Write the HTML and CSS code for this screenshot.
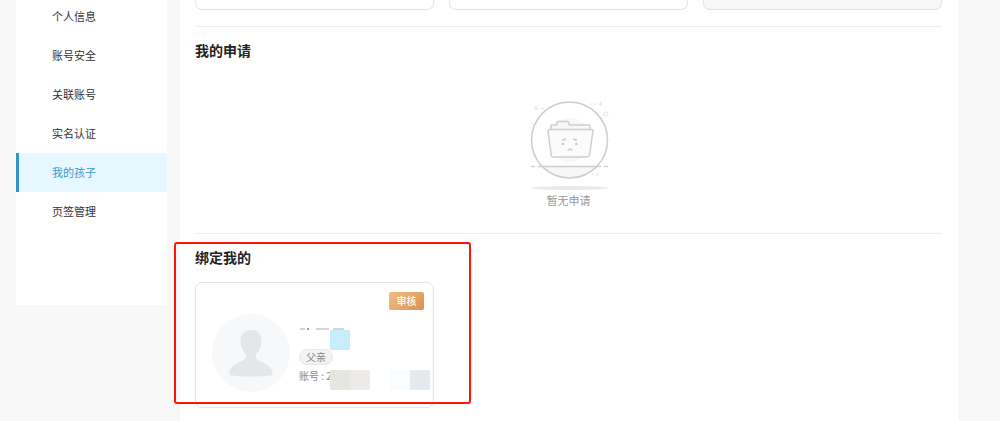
FILE: index.html
```
<!DOCTYPE html>
<html lang="zh-CN">
<head>
    <meta charset="utf-8">
    <title>我的孩子</title>
    <link rel="stylesheet" href="styles.css">
</head>
<body>
    <div class="page">
        <nav class="sidebar">
            <a class="menu-item" href="#info">个人信息</a>
            <a class="menu-item" href="#security">账号安全</a>
            <a class="menu-item" href="#linked">关联账号</a>
            <a class="menu-item" href="#realname">实名认证</a>
            <a class="menu-item active" href="#children">我的孩子</a>
            <a class="menu-item" href="#tabs">页签管理</a>
        </nav>

        <main class="content">
            <div class="card-grid">
                <div class="card card-end"></div>
                <div class="card card-end"></div>
                <div class="card card-end card-add"></div>
            </div>

            <section class="section">
                <h2>我的申请</h2>
                <div class="empty">
                    <svg width="80" height="92" viewBox="-1 0 80 92" fill="none">
                        <g stroke="#e6e6e6">
                            <path d="M3.500 8.500h5M6 6v5M68 4h5M70.500 1.500v5M60 4h2M64 4h2M11 8.500h3M1 23.500h2M66 73l3 3M69 73l-3 3M61 74.500h2"/>
                            <circle cx="76" cy="14" r="2"/>
                        </g>
                        <circle cx="40" cy="40" r="22" fill="#f7f7f7"/>
                        <path d="M11 66h57A38 38 0 0 1 11 66z" fill="#f7f7f7"/>
                        <circle cx="39.500" cy="40" r="38" stroke="#cdcdcd" stroke-width="1.500"/>
                        <path d="M1 66.500h4M8 66.500h63M74 66.500h4" stroke="#cfcfcf" stroke-width="1.500"/>
                        <g stroke="#cfcfcf" stroke-width="1.500" stroke-linejoin="round">
                            <path d="M21 29v-3q0-1 1-1h5v-2q0-1.500 1.500-1.500h9q1.500 0 1.500 1.500v2h20q1 0 1 1v3"/>
                            <path d="M19 29.500h42.500q1.500 0 1.500 1.500l-3.500 24q-.3 2-2 2H23.500q-2 0-2.300-2l-3.200-24q-.500-1.500 1-1.500z" fill="#fbfbfb"/>
                        </g>
                        <path d="M32 40q3 0 3.500-1.500M43.500 38.500q.5 1.500 3.500 1.500M38 50.500q2-3 4.500 0" stroke="#cacaca" stroke-width="1.500"/>
                        <g fill="#cacaca">
                            <circle cx="33" cy="44" r="1.300"/>
                            <circle cx="46.500" cy="44" r="1.300"/>
                        </g>
                        <ellipse cx="39.500" cy="88" rx="39" ry="2" fill="#e9e9e9"/>
                    </svg>
                    <p>暂无申请</p>
                </div>
            </section>

            <section class="section bind-section">
                <h2>绑定我的</h2>
                <div class="card-grid">
                    <div class="card person-card">
                        <svg class="avatar" width="78" height="78" viewBox="0 0 78 78">
                            <circle cx="39" cy="39" r="39" fill="#f6f8fa"/>
                            <path d="M39 16c-7 0-10.500 5-10.500 11 0 6 2.500 10 5.500 13.500v3.500c-2 4-16 5-16.700 16q0 1 1 1.300 20.700 2.700 41.400 0 1-.3 1-1.300C60 49 46 48 44 44v-3.500c3-3.500 5.500-7.500 5.500-13.500 0-6-3.500-11-10.500-11z" fill="#e4e6e8"/>
                        </svg>
                        <div class="person">
                            <svg class="name" width="48" height="2" viewBox="0 0 48 2">
                                <path d="M1 1h5M17 1h13M34 1h11" stroke="#aaa"/>
                                <path d="M8 1h2" stroke="#444"/>
                            </svg>
                            <span class="relation">父亲</span>
                            <span class="account">账号 : 2</span>
                            <i class="mosaic mosaic-name"></i>
                            <i class="mosaic mosaic-account"></i>
                            <i class="mosaic mosaic-tail"></i>
                        </div>
                        <button class="audit-btn" type="button">审核</button>
                    </div>
                </div>
                <div class="highlight"></div>
            </section>
        </main>
    </div>
</body>
</html>
```

FILE: styles.css
```
* {
    box-sizing: border-box;
}

body {
    margin: 0;
    background: #f8f8f8;
    color: #333;
    font-family: "Noto Sans CJK SC", sans-serif;
    font-size: 11px;
}

.page {
    display: flex;
    align-items: flex-start;
    gap: 13px;
    min-height: 100vh;
    padding: 0 42px 0 16px;
    overflow: hidden;
}

/* sidebar */
.sidebar {
    flex: 0 0 151px;
    margin-top: -3px;
    padding-bottom: 74px;
    background: #fff;
}

.menu-item {
    display: block;
    padding-left: 36px;
    line-height: 39px;
    color: #333;
    text-decoration: none;
}

.menu-item.active {
    padding-left: 33px;
    border-left: 3px solid #3296c8;
    background: #e6f7ff;
    color: #3c9bcb;
}

/* content */
.content {
    flex: 1;
    align-self: stretch;
    padding: 0 16px 13px 15px;
    background: #fff;
}

.card-grid {
    display: grid;
    grid-template-columns: repeat(3, 1fr);
    gap: 15px;
}

.card {
    border: 1px solid #e4e4e4;
    border-radius: 7px;
}

.card-end {
    height: 10px;
    border-top: none;
    border-radius: 0 0 7px 7px;
}

.card-add {
    background: #f8f8f8;
}

.section {
    position: relative;
    margin-top: 16px;
    border-top: 1px solid #ededed;
}

h2 {
    margin: 13px 0 15px;
    font-size: 14px;
    line-height: 20px;
    color: #222;
}

.empty {
    display: flex;
    flex-direction: column;
    align-items: center;
    padding: 25px 0 9px;
    color: #999;
}

.empty svg {
    display: block;
}

.empty p {
    margin: 0;
    line-height: 16px;
}

/* bound person */
.person-card {
    display: flex;
    align-items: flex-start;
    height: 126px;
    padding: 9px;
}

.avatar {
    flex: none;
    margin: 22px 9px 0 7px;
}

.person {
    position: relative;
    display: flex;
    flex: 1;
    flex-direction: column;
    align-items: flex-start;
    padding-top: 36px;
    font-size: 10px;
    color: #888;
}

.relation {
    margin-top: 19px;
    padding: 0 6px;
    border: 1px solid #e8e8e8;
    border-radius: 8px;
    background: #f3f3f3;
    line-height: 14px;
}

.account {
    margin-top: 3px;
    line-height: 16px;
}

.audit-btn {
    flex: none;
    width: 35px;
    height: 18px;
    padding: 0;
    border: none;
    border-radius: 2px;
    background: linear-gradient(135deg, #f0bd86, #d9934c);
    color: #fff;
    font-family: inherit;
    font-size: 10px;
    font-weight: 500;
    line-height: 18px;
}

.mosaic {
    position: absolute;
    height: 20px;
}

.mosaic-name {
    top: 38px;
    left: 31px;
    width: 20px;
    background: #c8eefe;
}

.mosaic-account {
    top: 78px;
    left: 31px;
    width: 40px;
    background: linear-gradient(90deg, #e6e6e1 50%, #eeeaea 50%);
}

.mosaic-tail {
    top: 78px;
    left: 91px;
    width: 40px;
    background: linear-gradient(90deg, #f9fdff 50%, #e4e9ed 50%);
}

/* red marker frame around the bound person */
.highlight {
    position: absolute;
    top: 8px;
    left: -21px;
    width: 297px;
    height: 162px;
    border: 2px solid #ff1408;
    border-radius: 3px;
}
```
